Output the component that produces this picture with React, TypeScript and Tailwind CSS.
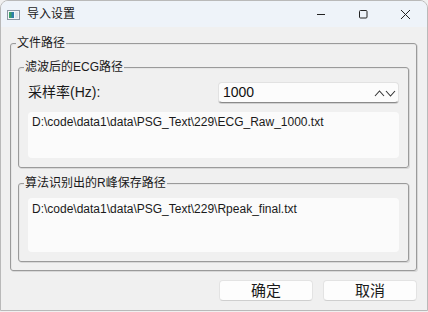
import React from "react";

const cjk = { fontFamily: '"Liberation Sans", "Noto Sans CJK SC", sans-serif' };

function Group({ title, className, children }: { title: string; className?: string; children: React.ReactNode }) {
  return (
    <div className={"relative rounded-[3px] border border-[#9a9a9a] shadow-[1px_1px_0_#d8d8d8,inset_1px_1px_0_#e6e6e6] " + (className ?? "")}>
      <div className="absolute -top-[9px] left-[5px] bg-[#f0f0f0] px-[1px] text-[12px] leading-[16px] text-[#1a1a1a]">{title}</div>
      {children}
    </div>
  );
}

export default function App() {
  return (
    <div style={cjk} className="w-[428px] h-[312px] overflow-hidden bg-[#f0f0f0] text-black">
      <div className="w-[428px] h-[311px] flex flex-col rounded-t-[8px] border border-[#b9b9b9] bg-[#f0f0f0] overflow-hidden">
        {/* title bar */}
        <div className="h-[26px] flex items-center bg-[#eef3f9] shrink-0">
          <svg width="13" height="10" viewBox="0 0 13 10" className="ml-[6px] mt-[1px]">
            <rect x="0.5" y="0.5" width="12" height="9" fill="#f4f6f8" stroke="#8b97a3" />
            <rect x="2" y="2" width="5" height="6" fill="#2f7fa8" />
            <rect x="2" y="2" width="2.5" height="6" fill="#3aa06a" />
            <rect x="8" y="2" width="3" height="6" fill="#dfe6ec" />
          </svg>
          <span className="ml-[7px] text-[12px] text-[#1a1a1a]">导入设置</span>
          <div className="flex-1" />
          <svg width="10" height="10" viewBox="0 0 10 10" className="mr-[32px]">
            <line x1="1" y1="5.5" x2="9" y2="5.5" stroke="#222" strokeWidth="1" />
          </svg>
          <svg width="10" height="10" viewBox="0 0 10 10" className="mr-[32px]">
            <rect x="1.5" y="1.5" width="7.5" height="7.5" rx="1" fill="none" stroke="#222" strokeWidth="1" />
          </svg>
          <svg width="11" height="11" viewBox="0 0 11 11" className="mr-[16px]">
            <path d="M1 1 L10 10 M10 1 L1 10" stroke="#222" strokeWidth="1" />
          </svg>
        </div>
        {/* body */}
        <div className="flex-1 flex flex-col pl-[9px] pr-[10px] pt-[16px]">
          <Group title="文件路径" className="h-[228px] pt-[23px] pl-[7px] pr-[7px] pb-[8px] flex flex-col">
            <Group title="滤波后的ECG路径" className="h-[101px] pt-[14px] pl-[8px] pr-[9px] flex flex-col">
              <div className="flex items-center h-[21px]">
                <span className="text-[14px] ml-[1px] text-[#1a1a1a]">采样率(Hz):</span>
                <div className="flex-1" />
                <div className="w-[181px] h-[21px] rounded-[4px] bg-[#fcfcfc] border border-[#e2e2e2] border-b-[#8a8a8a] flex items-center pl-[4px] pr-[2px] shadow-[0_1px_0_#d0d0d0]">
                  <span className="text-[14px] text-[#111]">1000</span>
                  <div className="flex-1" />
                  <svg width="22" height="8" viewBox="0 0 22 8">
                    <path d="M1 7 L5.5 2 L10 7" stroke="#333" strokeWidth="1.1" fill="none" />
                    <path d="M12 2 L16.5 7 L21 2" stroke="#333" strokeWidth="1.1" fill="none" />
                  </svg>
                </div>
              </div>
              <div className="mt-[9px] ml-[1px] h-[46px] rounded-[4px] bg-[#fbfbfb] px-[4px] pt-[1px] text-[12px] leading-[18px] text-[#1a1a1a]">
                D:\code\data1\data\PSG_Text\229\ECG_Raw_1000.txt
              </div>
            </Group>
            <div className="h-[15px]" />
            <Group title="算法识别出的R峰保存路径" className="flex-1 pt-[14px] pl-[9px] pr-[9px] pb-[9px] flex flex-col">
              <div className="h-[54px] rounded-[4px] bg-[#fbfbfb] px-[4px] pt-[2px] text-[12px] leading-[18px] text-[#1a1a1a]">
                D:\code\data1\data\PSG_Text\229\Rpeak_final.txt
              </div>
            </Group>
          </Group>
          <div className="flex justify-end gap-[10px] mt-[9px]">
            <button className="w-[94px] h-[21px] rounded-[4px] bg-[#fdfdfd] border border-[#e3e3e3] border-b-[#cfcfcf] text-[15px] leading-[18px] text-[#1a1a1a]">确定</button>
            <button className="w-[94px] h-[21px] rounded-[4px] bg-[#fdfdfd] border border-[#e3e3e3] border-b-[#cfcfcf] text-[15px] leading-[18px] text-[#1a1a1a]">取消</button>
          </div>
        </div>
      </div>
    </div>
  );
}
